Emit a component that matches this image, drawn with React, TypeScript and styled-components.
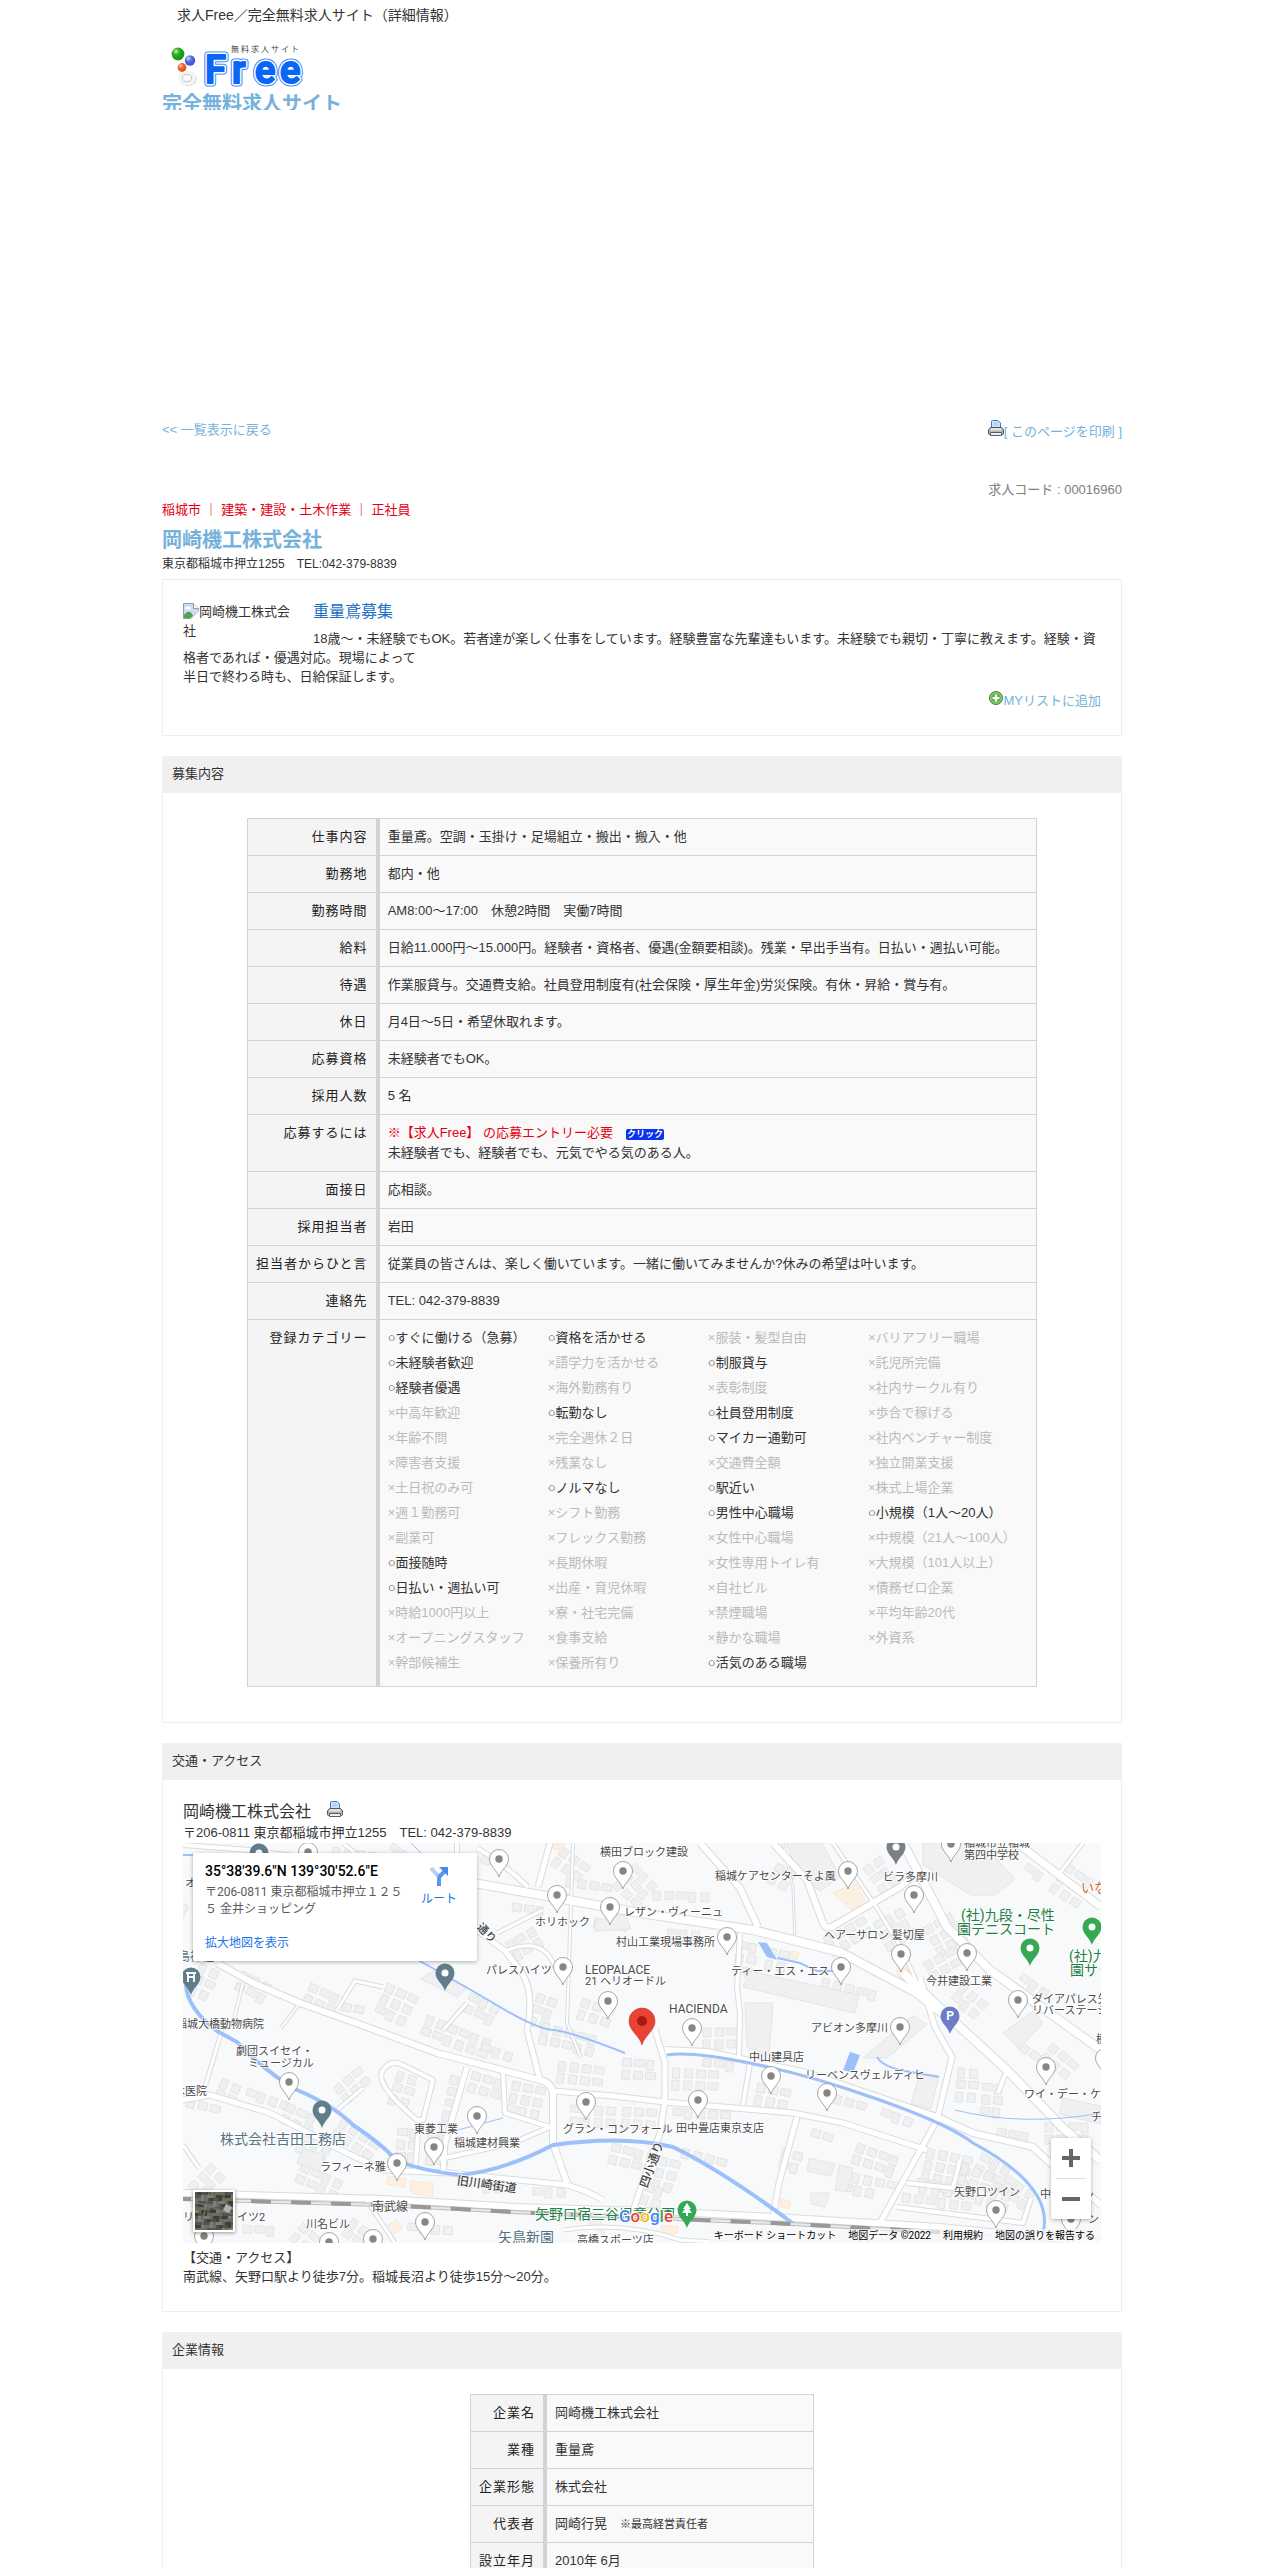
import React from "react";
import styled, { createGlobalStyle, css } from "styled-components";

const SANS = '"Liberation Sans", "Noto Sans CJK JP", sans-serif';
const MAP_FONT = 'Roboto, "Noto Sans CJK JP", sans-serif';

const GlobalStyle = createGlobalStyle`
  *, *::before, *::after { box-sizing: border-box; }
  html, body { margin: 0; padding: 0; background: #fff; }
  body { font-family: ${SANS}; font-size: 13px; line-height: 20px; color: #333; }
  h1, h2, h3, p, ul { margin: 0; padding: 0; font-weight: normal; }
  ul { list-style: none; }
  a { color: #74b2db; text-decoration: none; }
`;

/* ---------- layout ---------- */

const Page = styled.div`
  max-width: 960px;
  margin: 0 auto;
`;

const SiteTitle = styled.h1`
  padding: 5px 15px 0;
  font-size: 14px;
  line-height: 20px;
`;

const Brand = styled.div`
  height: 75px;
  margin-top: 10px;
  overflow: hidden;

  svg { display: block; }
  a { display: block; font-size: 20px; line-height: 22px; font-weight: bold; }
`;

const PageNav = styled.nav`
  display: flex;
  justify-content: space-between;
  align-items: flex-start;
  margin-top: 310px;
`;

const InlineIcon = styled.svg`
  vertical-align: baseline;
`;

const JobCode = styled.p`
  margin-top: 38px;
  text-align: right;
  color: #808080;
`;

const Tags = styled.p`
  color: #e60012;
`;

const CompanyName = styled.h2`
  margin-top: 6px;
  font-size: 20px;
  line-height: 28px;
  font-weight: bold;
  color: #74b2db;
`;

const CompanyAddress = styled.p`
  font-size: 12px;
`;

const Intro = styled.section`
  margin: 5px 0 20px;
  padding: 20px 20px 24px;
  border: 1px solid #eee;
`;

const Photo = styled.div`
  float: left;
  width: 110px;
  margin: 2px 20px 0 0;
  line-height: 19px;
`;

const PhotoMark = styled.svg`
  vertical-align: text-bottom;
`;

const Headline = styled.h3`
  font-size: 16px;
  line-height: 24px;
  color: #1a70c4;
`;

const IntroText = styled.p`
  margin-top: 5px;
  line-height: 19px;
`;

const IntroActions = styled.div`
  margin-top: 5px;
  text-align: right;
`;

const Section = styled.section`
  margin-bottom: 20px;
`;

const SectionTitle = styled.h2`
  padding: 8px 10px 9px;
  font-size: 13px;
  line-height: 20px;
  background: #f0f0f0;
`;

const TableBody = styled.div`
  display: flex;
  justify-content: center;
  padding: 25px 20px 35px;
  border: 1px solid #eee;
  border-top: 0;
`;

const AccessBody = styled.div`
  padding: 20px 20px 25px;
  border: 1px solid #eee;
  border-top: 0;
`;

/* ---------- data tables ---------- */

const DataTable = styled.table<{ $width: number }>`
  width: ${(p) => p.$width}px;
  max-width: 100%;
  border: 1px solid #d3d3d3;
  border-bottom: 0;
  border-spacing: 0;

  th, td {
    padding: 8px;
    border-bottom: 1px solid #d3d3d3;
    vertical-align: top;
  }
  th {
    width: 1px;
    border-right: 4px solid #d3d3d3;
    background: #f4f4f4;
    color: #222;
    font-weight: normal;
    letter-spacing: 1px;
    text-align: right;
    white-space: nowrap;
  }
  td { background: #f9f9f9; }
`;

const Alert = styled.span`
  color: #e60012;
`;

const ClickBadge = styled.a`
  display: inline-block;
  width: 38px;
  height: 11px;
  border-radius: 2px;
  background: #0a34ee;
  color: #fff;
  font-size: 9px;
  line-height: 11px;
  font-weight: bold;
  text-align: center;
  vertical-align: 0;
`;

const Small = styled.small`
  font-size: 11px;
`;

const Categories = styled.ul`
  display: grid;
  grid-template-columns: repeat(4, 1fr);
`;

const Category = styled.li<{ $on: boolean }>`
  margin-bottom: 5px;
  white-space: nowrap;
  color: ${(p) => (p.$on ? "#333" : "#bbb")};
`;

/* ---------- map ---------- */

const PlaceName = styled.p`
  font-size: 16px;
  line-height: 23px;
`;

const MapFrame = styled.div`
  position: relative;
  height: 400px;
  overflow: hidden;
  font-family: ${MAP_FONT};
`;

const MapCanvas = styled.svg`
  display: block;
  width: 100%;
  height: 100%;
  background: #f8f9fb;
`;

const panel = css`
  position: absolute;
  background: #fff;
  border-radius: 2px;
  box-shadow: 0 1px 4px rgba(0, 0, 0, 0.3);
`;

const PlaceCard = styled.div`
  ${panel}
  top: 10px;
  left: 10px;
  display: flex;
  justify-content: space-between;
  width: 284px;
  height: 108px;
  padding: 9px 20px 9px 12px;
  font-size: 12px;
  line-height: 17px;
  color: #5b5b5b;

  a { color: #1a73e8; }
`;

const PlaceInfo = styled.div`
  display: flex;
  flex-direction: column;
  width: 204px;

  strong { margin-bottom: 4px; font-size: 14px; line-height: 18px; font-weight: 500; color: #000; }
  a { margin-top: auto; }
`;

const RouteLink = styled.a`
  display: flex;
  flex-direction: column;
  align-items: center;
  gap: 4px;
  padding-top: 3px;
`;

const Satellite = styled.button`
  position: absolute;
  left: 10px;
  bottom: 11px;
  width: 42px;
  height: 42px;
  padding: 0;
  border: 2px solid #fff;
  box-shadow: 0 1px 4px rgba(0, 0, 0, 0.4);
  background: #4b4b47;

  svg { display: block; }
`;

const ZoomPanel = styled.div`
  ${panel}
  right: 10px;
  bottom: 24px;
  width: 40px;
  padding: 0 5px;
`;

const ZoomButton = styled.button`
  display: grid;
  place-items: center;
  width: 30px;
  height: 40px;
  padding: 0;
  border: 0;
  background: none;

  & + & { height: 41px; border-top: 1px solid #e0e0e0; }
`;

const Attribution = styled.div`
  position: absolute;
  right: 0;
  bottom: 0;
  display: flex;
  gap: 12px;
  padding: 0 6px;
  background: rgba(248, 248, 248, 0.7);
  font-size: 10px;
  line-height: 14px;
  color: #000;

  a { color: #000; }
`;

const AccessText = styled.p`
  margin-top: 5px;
  line-height: 19px;
`;

/* ---------- icons ---------- */

const Printer = () => (
  <InlineIcon width="16" height="16" viewBox="0 0 16 16" aria-hidden="true">
    <path d="M3.500 8V1.500a1 1 0 0 1 1-1H10l2.500 2.500V8z" fill="#cfe4fb" stroke="#3f78c4" />
    <path d="M5.500 3h4M5.500 5h5" stroke="#9cc3f0" />
    <path d="M2.500 7.500h11l2 2.500v3.500a1 1 0 0 1-1 1h-13a1 1 0 0 1-1-1V10z" fill="#b4b4b4" stroke="#4d5461" />
    <path d="M3 8h10l1 2.500H2z" fill="#e2e2e2" />
    <path d="M2.500 12.500h11v3h-11z" fill="#efefef" stroke="#565e6c" />
  </InlineIcon>
);

const AddIcon = () => (
  <InlineIcon width="14" height="14" viewBox="0 0 14 14" aria-hidden="true">
    <circle cx="7" cy="7" r="6.500" fill="#5cb648" stroke="#4a7d3f" />
    <circle cx="7" cy="7" r="5.300" fill="none" stroke="#a4dc93" strokeWidth="0.8" />
    <path d="M7 3.600v6.800M3.600 7h6.800" stroke="#fff" strokeWidth="2.200" />
  </InlineIcon>
);

const MissingPhoto = () => (
  <PhotoMark width="16" height="16" viewBox="0 0 16 16" aria-hidden="true">
    <path d="M.5.500h10l5 5v10H.5z" fill="#c8dcf8" stroke="#9a9a9a" />
    <path d="M10.500.500v5h5" fill="#fff" stroke="#9a9a9a" />
    <ellipse cx="5" cy="5" rx="3" ry="1.500" fill="#fff" />
    <path d="M1 15v-3c3-4 6-4 8-1l3 4z" fill="#4fa64f" />
    <path d="M16 7 7 16h9z" fill="#fff" />
    <path d="M15.500 8 8 15.500" stroke="#b5b5b5" />
  </PhotoMark>
);

const LETTERS: [string, number][] = [["F", 43], ["r", 70], ["e", 93], ["e", 118]];

const Logo = () => (
  <svg width="150" height="58" viewBox="0 0 150 58" role="img" aria-label="無料求人サイト Free">
    <defs>
      <radialGradient id="ballG" cx="35%" cy="30%"><stop offset="0" stopColor="#c4f5b4" /><stop offset=".5" stopColor="#2fb324" /><stop offset="1" stopColor="#1b9a1b" /></radialGradient>
      <radialGradient id="ballB" cx="35%" cy="30%"><stop offset="0" stopColor="#dde2ff" /><stop offset=".5" stopColor="#6478ea" /><stop offset="1" stopColor="#4658d2" /></radialGradient>
      <radialGradient id="ballO" cx="35%" cy="30%"><stop offset="0" stopColor="#ffd6c2" /><stop offset=".5" stopColor="#f9713f" /><stop offset="1" stopColor="#e2552a" /></radialGradient>
    </defs>
    <ellipse cx="26" cy="44" rx="9" ry="7" fill="#dcdcdc" />
    <ellipse cx="25" cy="43" rx="7" ry="5.500" fill="none" stroke="#f4f4f4" strokeWidth="4" />
    <ellipse cx="25" cy="43" rx="4.500" ry="3.500" fill="#fff" stroke="#c6c6c6" />
    <circle cx="16" cy="19" r="6.400" fill="url(#ballG)" />
    <circle cx="28" cy="25.500" r="5.200" fill="url(#ballB)" />
    <circle cx="20" cy="32.500" r="4.400" fill="url(#ballO)" />
    <g fontFamily="Roboto, sans-serif" fontWeight="500" fontSize="38" strokeLinejoin="round">
      {[["#3b83f4", 7], ["#fff", 5], ["#0a66f5", 2]].map(([color, width]) =>
        LETTERS.map(([letter, x]) => (
          <text key={`${color}${x}`} x={x} y="48" fill={color as string} stroke={color as string} strokeWidth={width}>
            {letter}
          </text>
        ))
      )}
    </g>
    <text x="69" y="17" fontFamily={SANS} fontSize="8" fill="#444">
      {[..."無料求人サイト"].map((c, i) => (
        <tspan key={i} x={69 + i * 10}>{c}</tspan>
      ))}
    </text>
  </svg>
);

/* ---------- map drawing ---------- */

const ROADS: [string, number][] = [
  ["M0 2 L67 7 L130 16", 5], ["M367 0 L355 44", 6], ["M274 0 L274 40", 5], ["M294 5 Q320 20 345 44", 5],
  ["M160 0 L190 25", 4], ["M517 0 L557 45 L575 84", 7], ["M590 0 L624 37 L640 80 Q644 88 652 82 L717 44 L734 30", 7],
  ["M600 0 L610 45 L612 95", 2], ["M650 0 L692 62 L720 108 L734 140", 4], ["M834 0 L918 64", 8], ["M877 30 L900 0", 4],
  ["M557 90 L554 144 L557 170 L556 214", 5], ["M737 134 L752 184 L769 214 L754 277 L697 380", 6],
  ["M472 187 L482 220 L482 257 L477 290 L457 347 L450 368", 6], ["M567 220 L560 262", 5],
  ["M482 207 L524 209 L624 230 L754 274 L790 290 L850 304 L867 320 L918 362", 7],
  ["M482 259 L540 264 L610 270 L660 280 L744 307", 6], ["M614 274 L596 340 L590 374", 6],
  ["M724 340 L770 345 L777 317", 5], ["M714 364 L840 380 L848 355", 5], ["M815 250 L824 227", 5],
  ["M0 257 L27 252 L87 270 L164 310 L200 327 L267 330 L384 342 Q405 348 420 357", 6],
  ["M34 120 L70 140 L117 160 L184 184 L254 210 L357 237 Q370 240 370 252 L370 300 L384 340", 7],
  ["M117 160 L98 185", 3], ["M60 140 L50 180", 3], ["M294 87 L322 108 L338 128 Q352 150 344 187 L357 237", 6],
  ["M322 108 Q360 92 372 124", 4], ["M234 277 Q190 240 200 227 Q208 216 220 222 L250 237 L240 277 Z M236 277 L232 330", 5],
  ["M284 224 L262 300 L260 330", 6], ["M320 230 L322 270 L367 284 L330 300 L257 316", 5], ["M370 248 L430 253 L482 259", 6],
  ["M154 167 L172 138 L200 144", 4], ["M284 160 L260 187", 4], ["M314 90 L360 67", 4], ["M39 187 L22 244", 4],
  ["M154 267 L180 245", 4], ["M184 358 L212 400", 4], ["M0 302 L16 325", 4], ["M380 387 Q440 378 497 397 L550 400", 4],
  ["M0 350 L200 356 L334 364 L490 369 L590 374 L757 384 L918 400", 7], ["M390 0 L384 180 L398 215", 3],
  ["M720 0 L764 84 L807 127 L890 187 L918 207", 9], ["M720 130 L777 184 L824 227 L880 285 L918 318", 9],
  ["M280 38 L457 70 L570 87 L657 109 L734 150 L777 184", 9],
];

const RIVERS: [string, number][] = [
  ["M226 112 Q280 142 317 164 T370 187 T442 210", 2], ["M484 212 Q507 208 567 220 T697 257 T790 300 Q872 344 860 390", 3],
  ["M3 142 Q4 165 34 188 L54 199 Q84 230 114 247 Q150 262 170 282 Q200 302 214 318 Q240 328 277 332 Q320 328 370 302 Q440 292 490 304 Q540 328 612 382", 4],
  ["M594 115 L617 120 L634 128 L660 128", 2], ["M694 214 Q700 224 722 228 L756 234", 2], ["M772 267 Q840 284 918 270", 1],
  ["M0 12 L12 12", 2], ["M228 0 L240 12", 1], ["M275 287 L320 275", 1],
];

/* x, y, columns, rows, rotation of each block of houses */
const BLOCKS: [number, number, number, number, number][] = [
  [150, 4, 4, 1, 8], [210, 0, 3, 2, 35], [300, 12, 2, 1, 20], [380, 4, 3, 2, 35], [384, 34, 4, 1, 10], [452, 20, 3, 3, 45],
  [330, 60, 3, 1, 8], [470, 48, 5, 1, 2], [412, 75, 3, 1, 10], [485, 86, 3, 1, 5], [350, 84, 2, 3, 60], [355, 150, 2, 3, 20],
  [18, 120, 2, 3, 25], [60, 128, 3, 2, 26], [128, 140, 3, 2, 24], [205, 140, 3, 3, 25], [245, 172, 6, 2, 22], [288, 150, 3, 2, 25],
  [160, 160, 2, 1, 10], [400, 155, 3, 2, 18], [360, 180, 5, 2, 14], [300, 200, 3, 1, 20], [290, 228, 3, 2, 18], [268, 232, 1, 6, 12],
  [215, 228, 2, 3, 18], [215, 285, 2, 3, 5], [245, 290, 2, 3, 5], [330, 238, 3, 3, 12], [376, 218, 4, 2, 8], [388, 262, 4, 2, 3],
  [440, 215, 3, 2, 5], [440, 264, 3, 2, 4], [490, 225, 4, 2, 4], [490, 265, 5, 1, 4], [520, 215, 3, 1, 8], [575, 240, 3, 2, 12],
  [640, 248, 4, 1, 16], [700, 265, 3, 1, 20], [630, 285, 2, 1, 20], [675, 300, 4, 2, 20], [745, 305, 4, 4, 12], [800, 310, 3, 2, 30],
  [735, 335, 5, 1, 10], [720, 350, 6, 1, 8], [780, 320, 5, 3, 20], [826, 332, 3, 2, 35], [815, 285, 3, 1, 10], [862, 280, 4, 2, 0],
  [775, 225, 2, 3, 5], [800, 240, 2, 3, 5], [840, 200, 3, 1, 35], [870, 200, 3, 2, 40], [640, 95, 4, 2, -28], [690, 80, 3, 3, -28],
  [740, 85, 3, 3, -30], [740, 120, 4, 2, -28], [780, 140, 3, 2, 40], [555, 98, 2, 3, 10], [585, 105, 2, 2, 10], [680, 25, 2, 3, -35],
  [640, 135, 5, 1, 14], [845, 20, 2, 1, 35], [885, 20, 3, 3, 35], [5, 255, 3, 1, 15], [40, 235, 2, 2, 25], [65, 245, 4, 1, 20],
  [105, 260, 3, 2, 25], [150, 245, 3, 2, -40], [160, 275, 4, 2, 35], [120, 290, 3, 2, 25], [120, 320, 4, 2, 25], [28, 320, 2, 3, 45],
  [170, 375, 2, 2, 35], [225, 380, 4, 1, 5], [120, 380, 2, 2, 40], [280, 335, 3, 1, 5], [300, 340, 3, 1, 3], [350, 345, 3, 1, 0],
  [430, 300, 3, 2, 15], [465, 310, 3, 3, 15], [500, 305, 4, 1, 15], [462, 340, 2, 2, 18], [60, 382, 3, 1, 3], [520, 185, 3, 2, 0],
  [0, 60, 1, 5, 30], [840, 130, 3, 2, 35], [595, 20, 2, 2, 30], [600, 305, 2, 2, 15], [670, 330, 4, 1, 12], [660, 340, 3, 1, 12],
];

const BIG = [
  "M603 0h36l18 34-20 14-22-18z", "M740 0h80l-8 14 20 22-20 16-24 0-48-30z", "M566 128l110 24-4 18-112-26z",
  "M562 160h28l-4 52-22-8z", "M680 215l50-42 14 8-40 34z", "M736 232h20l-8 34-20-5z", "M626 315l26 6-4 12-24-5z",
  "M656 322l14 3-6 24-12-2z", "M628 350l18 0-4 14-14-3z", "M250 128l34 18-10 8-36-18z", "M412 78l30-8 6 16-36 2z",
  "M120 306l22 6-6 16-22-8z", "M880 255l38 8v18l-42-10z", "M820 190l30-22 10 12-24 26z", "M404 378l10-14 8 30z",
];

const PEACH = [
  "M650 50l22-10 12 20-14 8z", "M713 128l12-4 4 12-10 2z", "M227 338l23 2v14l-22-4z", "M205 333l18 3-1 8-18-3z",
  "M205 382l8-5 7 8-9 6z", "M479 382l16 2-1 7-16-2z", "M598 356l10 3-2 7-9-2z", "M608 108l8 1-2 8-7-2z", "M370 0l12 0-4 8-8-3z",
];

type Label = [string, number, number, number?, string?, number?, number?];

const GREEN = "#1e8044";
const SLATE = "#557383";

/* text, x, centre y, size, colour, rotation, weight */
const LABELS: Label[] = [
  ["横田ブロック建設", 417, 9], ["ホリホック", 352, 79], ["レザン・ヴィーニュ", 441, 69], ["村山工業現場事務所", 433, 99],
  ["パレスハイツ", 303, 127], ["LEOPALACE", 402, 127, 12], ["21 ヘリオードル", 402, 138], ["稲城大橋動物病院", -7, 181],
  ["通り", 296, 82, 11, "#444", 45, 500], ["オ", 2, 40], ["島神社", -5, 114, 12, SLATE], ["稲城ケアセンターそよ風", 532, 33],
  ["ビラ多摩川", 700, 34], ["稲城市立稲城", 781, 0], ["第四中学校", 781, 12], ["ヘアーサロン 髪切屋", 641, 92],
  ["ティー・エス・エス", 548, 128], ["今井建設工業", 743, 138], ["(社)九段・尽性", 778, 72, 14, GREEN],
  ["園テニスコート", 774, 86, 14, GREEN], ["(社)九段", 886, 113, 14, GREEN], ["園サッカー", 887, 127, 14, GREEN],
  ["いな", 898, 44, 13, "#d2691e"], ["ダイアパレス矢野口", 849, 156], ["リバーステージ", 849, 167], ["HACIENDA", 486, 166, 12],
  ["アビオン多摩川", 628, 185], ["中山建具店", 566, 214], ["リーベンスヴェルディヒ", 622, 232], ["ワイ・デー・ケー", 841, 251],
  ["チ", 908, 274], ["樹", 913, 196], ["田中畳店東京支店", 493, 285], ["グラン・コンフォール", 380, 286], ["劇団スイセイ・", 53, 208],
  ["ミュージカル", 65, 220], ["木医院", -9, 248], ["株式会社吉田工務店", 37, 296, 14, SLATE], ["東菱工業", 231, 286],
  ["稲城建材興業", 271, 300], ["ラフィーネ雅", 137, 324], ["旧川崎街道", 274, 337, 12, "#444", 8, 500], ["南武線", 189, 364, 12],
  ["川名ビル", 123, 381], ["リ", 0, 374], ["イツ2", 54, 374], ["矢野口宿三谷児童公園", 352, 371, 14, GREEN],
  ["矢鳥新園", 315, 394, 14, SLATE], ["高橋スポーツ店", 394, 397], ["四小通り", 460, 344, 12, "#444", -70, 500],
  ["矢野口ツイン", 771, 349], ["中", 857, 351], ["ン", 900, 352], ["ンコ", 905, 376],
];

const WHITE_PINS: [number, number][] = [
  [125, 9], [316, 16], [440, 28], [374, 52], [427, 64], [380, 124], [425, 158], [665, 28], [768, 1], [731, 52], [544, 94],
  [658, 124], [718, 111], [784, 110], [835, 157], [509, 185], [717, 184], [106, 239], [294, 273], [251, 304], [214, 320],
  [403, 259], [21, 393], [242, 379], [146, 399], [190, 396], [588, 233], [644, 250], [515, 257], [863, 224], [813, 367],
  [888, 376], [922, 215],
];

const COLOR_PINS: [number, number, string, string?][] = [
  [262, 130, "#607d8b"], [76, 10, "#607d8b"], [8, 134, "#607d8b", "shrine"], [713, 4, "#7b8087"], [139, 267, "#607d8b"],
  [909, 84, "#34a853"], [847, 105, "#34a853"], [504, 367, "#34a853", "tree"], [767, 173, "#6d7cc9", "P"],
];

const PIN = "M0 18C-2 11-9.500 7-9.500 0a9.500 9.500 0 1 1 19 0C9.500 7 2 11 0 18z";

const Houses = () => (
  <g fill="#f0f0f1" stroke="#e0e1e3" strokeWidth="0.8">
    {BLOCKS.map(([x, y, cols, rows, angle], b) => (
      <g key={b} transform={`translate(${x} ${y}) rotate(${angle})`}>
        {Array.from({ length: cols * rows }, (_, i) => {
          const seed = (b * 7 + i * 5) % 4;
          return <rect key={i} x={(i % cols) * 12} y={Math.floor(i / cols) * 12} width={7 + seed} height={10 - seed} />;
        })}
      </g>
    ))}
    {BIG.map((d) => <path key={d} d={d} />)}
  </g>
);

const StreetMap = () => (
  <MapCanvas viewBox="0 0 918 400" preserveAspectRatio="xMidYMid slice" role="img" aria-label="岡崎機工株式会社 周辺地図">
    <Houses />
    <g fill="#fdf0e2" stroke="#f8dfc6" strokeWidth="0.6">{PEACH.map((d) => <path key={d} d={d} />)}</g>
    <g fill="none" stroke="#d9dbde" strokeLinejoin="round">
      {ROADS.map(([d, w]) => <path key={d} d={d} strokeWidth={w + 1} />)}
    </g>
    <g fill="none" stroke="#fff" strokeLinejoin="round">
      {ROADS.map(([d, w]) => <path key={d} d={d} strokeWidth={w - 1} />)}
    </g>
    <g fill="none" stroke="#9cc0f9">{RIVERS.map(([d, w]) => <path key={d} d={d} strokeWidth={w} />)}</g>
    <path d="M667 209l10 3-7 18-10-3zM575 99l9 1 10 17-10-3z" fill="#9cc0f9" />
    <path d="M0 356L200 362L350 370L590 380L757 389" fill="none" stroke="#bdbdbd" strokeWidth="4" />
    <path d="M0 356L200 362L350 370L590 380L757 389" fill="none" stroke="#e9e9e9" strokeWidth="2" />
    <path d="M0 356L200 362L350 370L590 380L757 389" fill="none" stroke="#999" strokeWidth="4" strokeDasharray="20 20" strokeDashoffset="12" />
    <g fontFamily={MAP_FONT} stroke="#fff" strokeOpacity="0.8" strokeWidth="2" paintOrder="stroke" strokeLinejoin="round">
      {LABELS.map(([text, x, y, size = 11, color = "#4a4a4a", angle = 0, weight = 400]) => (
        <text key={text} x={x} y={y} dy="0.37em" fontSize={size} fill={color} fontWeight={weight}
          transform={angle ? `rotate(${angle} ${x} ${y})` : undefined}>
          {text}
        </text>
      ))}
    </g>
    {WHITE_PINS.map(([x, y]) => (
      <g key={`${x},${y}`} transform={`translate(${x} ${y})`}>
        <path d={PIN} fill="#fff" stroke="#8f8f8f" strokeWidth="0.8" />
        <circle r="3.700" fill="#858585" />
      </g>
    ))}
    {COLOR_PINS.map(([x, y, color, mark]) => (
      <g key={`${x},${y}`} transform={`translate(${x} ${y})`}>
        <path d={PIN} fill={color} />
        {!mark && <circle r="3.500" fill="#fff" />}
        {mark === "P" && <text y="4" textAnchor="middle" fontFamily="Roboto, sans-serif" fontWeight="bold" fontSize="12" fill="#fff">P</text>}
        {mark === "tree" && <path d="M0-7 4-1H2L5 3H1v3h-2V3h-4l3-4h-2z" fill="#fff" />}
        {mark === "shrine" && <path d="M-5-4H5M-4 0H4M-3-4V5M3-4V5" stroke="#fff" strokeWidth="1.800" />}
      </g>
    ))}
    <path d="M459 202c-2-9-13-14-13-24a13 13 0 1 1 26 0c0 10-11 15-13 24z" fill="#ea4335" stroke="#c5352a" strokeWidth="0.6" />
    <circle cx="459" cy="178" r="5" fill="#a81b12" />
    <text x="436" y="379" fontFamily="Roboto, sans-serif" fontSize="17" fontWeight="500" stroke="#fff" strokeWidth="2" paintOrder="stroke">
      {["#4285f4", "#ea4335", "#fbbc05", "#4285f4", "#34a853", "#ea4335"].map((c, i) => (
        <tspan key={i} fill={c}>{"Google"[i]}</tspan>
      ))}
    </text>
  </MapCanvas>
);

const SAT_COLORS = ["#4d5545", "#6f6f6a", "#3b3d40", "#827c78", "#50555e", "#66704f"];

const SatelliteTile = () => (
  <svg width="38" height="38" viewBox="0 0 38 38" aria-hidden="true">
    {Array.from({ length: 169 }, (_, i) => (
      <rect key={i} x={(i % 13) * 3} y={Math.floor(i / 13) * 3} width="3" height="3" fill={SAT_COLORS[(i * 7 + Math.floor(i / 5) * 5 + i * i) % 6]} />
    ))}
    <path d="M0 10 38 22M14 0 6 38" stroke="#7c7976" fill="none" />
    <path d="M31 12l6 3-3 6-6-3z" fill="#b5adb0" />
  </svg>
);

/* ---------- content ---------- */

const CATEGORIES = [
  "○すぐに働ける（急募）", "○資格を活かせる", "×服装・髪型自由", "×バリアフリー職場",
  "○未経験者歓迎", "×語学力を活かせる", "○制服貸与", "×託児所完備",
  "○経験者優遇", "×海外勤務有り", "×表彰制度", "×社内サークル有り",
  "×中高年歓迎", "○転勤なし", "○社員登用制度", "×歩合で稼げる",
  "×年齢不問", "×完全週休２日", "○マイカー通勤可", "×社内ベンチャー制度",
  "×障害者支援", "×残業なし", "×交通費全額", "×独立開業支援",
  "×土日祝のみ可", "○ノルマなし", "○駅近い", "×株式上場企業",
  "×週１勤務可", "×シフト勤務", "○男性中心職場", "○小規模（1人～20人）",
  "×副業可", "×フレックス勤務", "×女性中心職場", "×中規模（21人～100人）",
  "○面接随時", "×長期休暇", "×女性専用トイレ有", "×大規模（101人以上）",
  "○日払い・週払い可", "×出産・育児休暇", "×自社ビル", "×債務ゼロ企業",
  "×時給1000円以上", "×寮・社宅完備", "×禁煙職場", "×平均年齢20代",
  "×オープニングスタッフ", "×食事支給", "×静かな職場", "×外資系",
  "×幹部候補生", "×保養所有り", "○活気のある職場",
];

const JOB_ROWS: [string, React.ReactNode][] = [
  ["仕事内容", "重量鳶。空調・玉掛け・足場組立・搬出・搬入・他"],
  ["勤務地", "都内・他"],
  ["勤務時間", "AM8:00～17:00　休憩2時間　実働7時間"],
  ["給料", "日給11.000円～15.000円。経験者・資格者、優遇(金額要相談)。残業・早出手当有。日払い・週払い可能。"],
  ["待遇", "作業服貸与。交通費支給。社員登用制度有(社会保険・厚生年金)労災保険。有休・昇給・賞与有。"],
  ["休日", "月4日～5日・希望休取れます。"],
  ["応募資格", "未経験者でもOK。"],
  ["採用人数", "5 名"],
  ["応募するには", <>
    <Alert>※【求人Free】 の応募エントリー必要　</Alert><ClickBadge href="#">クリック</ClickBadge><br />
    未経験者でも、経験者でも、元気でやる気のある人。
  </>],
  ["面接日", "応相談。"],
  ["採用担当者", "岩田"],
  ["担当者からひと言", "従業員の皆さんは、楽しく働いています。一緒に働いてみませんか?休みの希望は叶います。"],
  ["連絡先", "TEL: 042-379-8839"],
  ["登録カテゴリー", <Categories>
    {CATEGORIES.map((c) => <Category key={c} $on={c[0] === "○"}>{c}</Category>)}
  </Categories>],
];

const COMPANY_ROWS: [string, React.ReactNode][] = [
  ["企業名", "岡崎機工株式会社"],
  ["業種", "重量鳶"],
  ["企業形態", "株式会社"],
  ["代表者", <>岡崎行晃　<Small>※最高経営責任者</Small></>],
  ["設立年月", "2010年 6月"],
];

const Rows = ({ rows, width }: { rows: [string, React.ReactNode][]; width: number }) => (
  <DataTable $width={width}>
    <tbody>
      {rows.map(([name, value]) => (
        <tr key={name}>
          <th scope="row">{name}</th>
          <td>{value}</td>
        </tr>
      ))}
    </tbody>
  </DataTable>
);

export default function App() {
  return (
    <Page lang="ja">
      <GlobalStyle />
      <header>
        <SiteTitle>求人Free／完全無料求人サイト（詳細情報）</SiteTitle>
        <Brand>
          <Logo />
          <a href="#">完全無料求人サイト</a>
        </Brand>
      </header>

      <PageNav>
        <a href="#">&lt;&lt; 一覧表示に戻る</a>
        <a href="#"><Printer />[ このページを印刷 ]</a>
      </PageNav>

      <main>
        <JobCode>求人コード : 00016960</JobCode>
        <Tags>稲城市 ｜ 建築・建設・土木作業 ｜ 正社員</Tags>
        <CompanyName>岡崎機工株式会社</CompanyName>
        <CompanyAddress>東京都稲城市押立1255　TEL:042-379-8839</CompanyAddress>

        <Intro>
          <Photo><MissingPhoto />岡崎機工株式会社</Photo>
          <Headline>重量鳶募集</Headline>
          <IntroText>
            18歳～・未経験でもOK。若者達が楽しく仕事をしています。経験豊富な先輩達もいます。未経験でも親切・丁寧に教えます。経験・資格者であれば・優遇対応。現場によって<br />
            半日で終わる時も、日給保証します。
          </IntroText>
          <IntroActions><a href="#"><AddIcon />MYリストに追加</a></IntroActions>
        </Intro>

        <Section>
          <SectionTitle>募集内容</SectionTitle>
          <TableBody><Rows rows={JOB_ROWS} width={790} /></TableBody>
        </Section>

        <Section>
          <SectionTitle>交通・アクセス</SectionTitle>
          <AccessBody>
            <PlaceName>岡崎機工株式会社　<a href="#" aria-label="地図を印刷"><Printer /></a></PlaceName>
            <p>〒206-0811 東京都稲城市押立1255　TEL: 042-379-8839</p>
            <MapFrame>
              <StreetMap />
              <PlaceCard>
                <PlaceInfo>
                  <strong>35°38'39.6"N 139°30'52.6"E</strong>
                  <span>〒206-0811 東京都稲城市押立１２５５ 金井ショッピング</span>
                  <a href="#">拡大地図を表示</a>
                </PlaceInfo>
                <RouteLink href="#">
                  <svg width="22" height="22" viewBox="0 0 22 22" aria-hidden="true">
                    <path d="M3 3l7 8" stroke="#b4d0f8" strokeWidth="4" />
                    <path d="M11 21v-7q0-3 3-5l3-3" fill="none" stroke="#5a96ec" strokeWidth="4" />
                    <path d="M11 2h9v9z" fill="#4687e8" />
                  </svg>
                  ルート
                </RouteLink>
              </PlaceCard>
              <Satellite type="button" aria-label="航空写真を表示"><SatelliteTile /></Satellite>
              <ZoomPanel>
                <ZoomButton type="button" aria-label="ズームイン">
                  <svg width="18" height="18" viewBox="0 0 18 18"><path d="M9 0v18M0 9h18" stroke="#666" strokeWidth="4" /></svg>
                </ZoomButton>
                <ZoomButton type="button" aria-label="ズームアウト">
                  <svg width="18" height="18" viewBox="0 0 18 18"><path d="M0 9h18" stroke="#666" strokeWidth="4" /></svg>
                </ZoomButton>
              </ZoomPanel>
              <Attribution>
                <a href="#">キーボード ショートカット</a>
                <span>地図データ ©2022</span>
                <a href="#">利用規約</a>
                <a href="#">地図の誤りを報告する</a>
              </Attribution>
            </MapFrame>
            <AccessText>
              【交通・アクセス】<br />
              南武線、矢野口駅より徒歩7分。稲城長沼より徒歩15分～20分。
            </AccessText>
          </AccessBody>
        </Section>

        <Section>
          <SectionTitle>企業情報</SectionTitle>
          <TableBody><Rows rows={COMPANY_ROWS} width={344} /></TableBody>
        </Section>
      </main>
    </Page>
  );
}
